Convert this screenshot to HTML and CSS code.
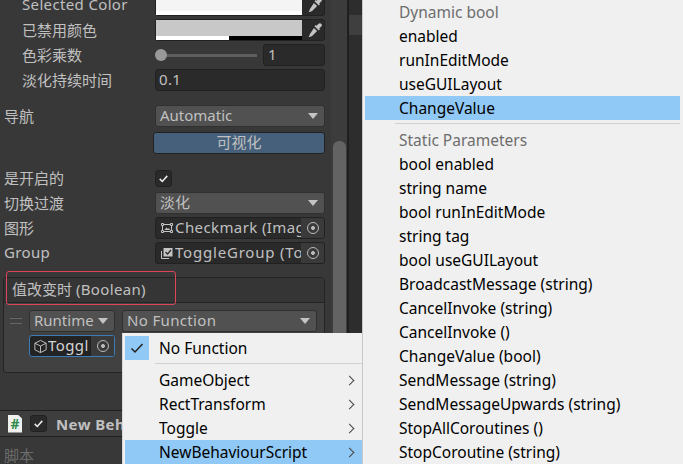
FILE: index.html
```html
<!DOCTYPE html>
<html lang="zh-CN">
<head>
   <meta charset="UTF-8">
   <title>Toggle Inspector</title>
   <link rel="stylesheet" href="styles.css">
</head>

<body>

<div class="editor">
   <div class="inspector">

      <div class="row row-sub cut-first">
         <span class="label lat">Selected Color</span>
         <div class="color-field">
            <div class="swatch swatch-white"><div class="alpha"></div></div>
            <svg class="dropper" viewBox="0 0 14 14"><path d="M10.500.8a1.900 1.900 0 0 1 2.700 2.700l-2 2 .8.8-1.200 1.200-4.300-4.300 1.200-1.200.8.8zM5.900 4.900l3.200 3.200-5 5c-.6.6-1.300.3-1.800.6l-.7.7-.9-.9.7-.7c.3-.5 0-1.200.6-1.800z"/></svg>
         </div>
      </div>

      <div class="row row-sub">
         <span class="label">已禁用颜色</span>
         <div class="color-field">
            <div class="swatch swatch-grey"><div class="alpha alpha-half"></div></div>
            <svg class="dropper" viewBox="0 0 14 14"><path d="M10.500.8a1.900 1.900 0 0 1 2.700 2.700l-2 2 .8.8-1.200 1.200-4.300-4.300 1.200-1.200.8.8zM5.900 4.900l3.200 3.200-5 5c-.6.6-1.300.3-1.800.6l-.7.7-.9-.9.7-.7c.3-.5 0-1.200.6-1.800z"/></svg>
         </div>
      </div>

      <div class="row row-sub">
         <span class="label">色彩乘数</span>
         <div class="slider-field">
            <div class="slider"><div class="slider-knob"></div></div>
            <div class="input input-num">1</div>
         </div>
      </div>

      <div class="row row-sub">
         <span class="label">淡化持续时间</span>
         <div class="input lat">0.1</div>
      </div>

      <div class="row row-nav">
         <span class="label">导航</span>
         <div class="dropdown">Automatic<span class="caret"></span></div>
      </div>

      <div class="row row-vis">
         <span class="label"></span>
         <div class="vis-button">可视化</div>
      </div>

      <div class="row row-on">
         <span class="label">是开启的</span>
         <div class="checkbox">
            <svg viewBox="0 0 16 16"><path d="M4 8.400l2.700 2.700L12 5.200"/></svg>
         </div>
      </div>

      <div class="row">
         <span class="label">切换过渡</span>
         <div class="dropdown">淡化<span class="caret"></span></div>
      </div>

      <div class="row">
         <span class="label">图形</span>
         <div class="object-field">
            <svg class="obj-icon" viewBox="0 0 14 14"><path d="M1.500 2.500h2v2h-2zM10.500 2.500h2v2h-2zM1.500 9.500h2v2h-2zM10.500 9.500h2v2h-2zM3.500 3.500h7M3.500 10.500h7M2.500 4.500v5M11.500 4.500v5"/><path class="fill" d="M4.500 9l2-2.500 1.500 1.500 1-1 1 2z"/></svg>
            <span class="obj-name">Checkmark (Imag</span>
            <span class="picker"><span class="picker-dot"></span></span>
         </div>
      </div>

      <div class="row">
         <span class="label lat">Group</span>
         <div class="object-field">
            <svg class="obj-icon" viewBox="0 0 14 14"><path d="M1.500 5v7.500H9"/><path class="fill" d="M3.500 2h9v8.500h-9z"/><path class="tick" d="M5.500 6l2 2 3.500-4"/></svg>
            <span class="obj-name obj-wide">ToggleGroup (To</span>
            <span class="picker"><span class="picker-dot"></span></span>
         </div>
      </div>

      <div class="event-box">
         <div class="event-head">值改变时 <span class="lat">(Boolean)</span></div>
         <div class="event-body">
            <div class="event-line">
               <span class="handle"></span>
               <div class="mini-drop mini-runtime">Runtime<span class="caret"></span></div>
               <div class="mini-drop mini-func">No Function<span class="caret"></span></div>
            </div>
            <div class="event-target">
               <div class="target-field">
                  <svg class="cube" viewBox="0 0 16 16"><path d="M8 1.500l6 3v7l-6 3-6-3v-7zM2 4.500l6 3 6-3M8 7.500v7"/></svg>
                  <span class="target-name">Toggl</span>
                  <span class="picker"><span class="picker-dot"></span></span>
               </div>
            </div>
         </div>
         <div class="annotation"></div>
      </div>

      <div class="comp-head">
         <div class="script-icon">#</div>
         <div class="checkbox comp-check">
            <svg viewBox="0 0 16 16"><path d="M4 8.400l2.700 2.700L12 5.200"/></svg>
         </div>
         <span class="comp-name">New Beh</span>
      </div>
      <div class="row script-row">
         <span class="label">脚本</span>
      </div>
   </div>

   <div class="scrollbar"><div class="thumb"></div></div>
   <div class="side"><div class="side-tab"></div></div>
</div>

<div class="menu menu-left">
   <div class="item item-checked">
      <span class="check-box"><svg viewBox="0 0 24 24"><path d="M6.500 12.500l3.500 3.500 7.500-8"/></svg></span>
      No Function
   </div>
   <div class="sep"></div>
   <div class="item">GameObject<span class="arrow"></span></div>
   <div class="item">RectTransform<span class="arrow"></span></div>
   <div class="item">Toggle<span class="arrow"></span></div>
   <div class="item item-on">NewBehaviourScript<span class="arrow"></span></div>
</div>

<div class="menu menu-right">
   <div class="item item-title">Dynamic bool</div>
   <div class="item">enabled</div>
   <div class="item">runInEditMode</div>
   <div class="item">useGUILayout</div>
   <div class="item item-on">ChangeValue</div>
   <div class="sep"></div>
   <div class="item item-title">Static Parameters</div>
   <div class="item">bool enabled</div>
   <div class="item">string name</div>
   <div class="item">bool runInEditMode</div>
   <div class="item">string tag</div>
   <div class="item">bool useGUILayout</div>
   <div class="item">BroadcastMessage (string)</div>
   <div class="item">CancelInvoke (string)</div>
   <div class="item">CancelInvoke ()</div>
   <div class="item">ChangeValue (bool)</div>
   <div class="item">SendMessage (string)</div>
   <div class="item">SendMessageUpwards (string)</div>
   <div class="item">StopAllCoroutines ()</div>
   <div class="item">StopCoroutine (string)</div>
</div>

</body>
</html>
```

FILE: styles.css
```css
html, body {
   height: 100%;
   overflow: hidden;
}

body {
   margin: 0;
   background: #383838;
   color: #c0c0c0;
   font-family: "Noto Sans", "Noto Sans CJK SC", sans-serif;
   font-size: 15px;
}

.lat {
   letter-spacing: .35px;
}

.editor {
   display: flex;
   height: 100%;
}

.inspector {
   width: 331px;
   flex: none;
   overflow: hidden;
   box-sizing: border-box;
   padding-right: 6px;
}

.row {
   display: flex;
   align-items: center;
   height: 22px;
   margin-bottom: 3px;
   white-space: nowrap;
}

.label {
   width: 155px;
   flex: none;
   padding-left: 4px;
   padding-bottom: 2px;
   box-sizing: border-box;
}

.row-sub .label {
   padding-left: 22px;
}

.cut-first {
   margin-top: -6px;
}

.row-nav {
   margin-top: 14px;
   margin-bottom: 5px;
}

.row-vis {
   margin-bottom: 13px;
}

.color-field {
   flex: 1;
   height: 100%;
   display: flex;
   box-sizing: border-box;
   background: #2a2a2a;
   border: 1px solid #212121;
   border-radius: 3px;
   align-items: stretch;
}

.swatch {
   width: 146px;
   height: 20px;
   display: flex;
   align-items: flex-end;
}

.swatch-white {
   background: #f4f4f4;
}

.swatch-grey {
   background: #c8c8c8;
}

.alpha {
   height: 4px;
   width: 100%;
   background: #fff;
}

.alpha-half {
   background: linear-gradient(90deg, #fff 50%, #000 50%);
}

.dropper {
   width: 14px;
   height: 14px;
   margin: 3px 0 0 6px;
   fill: #c4c4c4;
}

.slider-field {
   flex: 1;
   display: flex;
   align-items: center;
   height: 100%;
}

.slider {
   width: 102px;
   height: 3px;
   background: #5e5e5e;
   position: relative;
   margin-right: 6px;
}

.slider-knob {
   position: absolute;
   left: 0;
   top: -5px;
   width: 12px;
   height: 12px;
   border-radius: 50%;
   background: #999;
}

.input {
   flex: 1;
   height: 100%;
   box-sizing: border-box;
   background: #2a2a2a;
   border: 1px solid #212121;
   border-radius: 3px;
   padding-left: 3px;
   line-height: 19px;
}

.input-num {
   padding-left: 4px;
}

.dropdown {
   flex: 1;
   height: 100%;
   box-sizing: border-box;
   background: #515151;
   border: 1px solid #303030;
   border-radius: 3px;
   padding-left: 4px;
   padding-bottom: 1px;
   line-height: 19px;
   display: flex;
   justify-content: space-between;
   align-items: center;
}

.caret {
   width: 0;
   height: 0;
   border-left: 5px solid transparent;
   border-right: 5px solid transparent;
   border-top: 6px solid #c4c4c4;
   margin-right: 6px;
}

.vis-button {
   width: 172px;
   height: 100%;
   margin-left: -2px;
   box-sizing: border-box;
   background: #46607c;
   border: 1px solid #212121;
   border-radius: 3px;
   text-align: center;
   line-height: 19px;
}

.checkbox {
   width: 17px;
   height: 17px;
   background: #2a2a2a;
   border: 1px solid #212121;
   border-radius: 3px;
   box-sizing: border-box;
}

.checkbox svg {
   display: block;
   width: 15px;
   height: 15px;
   fill: none;
   stroke: #eee;
   stroke-width: 1.600;
}

.object-field {
   flex: 1;
   min-width: 0;
   height: 100%;
   box-sizing: border-box;
   background: #2a2a2a;
   border: 1px solid #212121;
   border-radius: 3px;
   display: flex;
   align-items: center;
   padding-left: 4px;
}

.obj-icon {
   width: 14px;
   height: 14px;
   flex: none;
   margin-right: 1px;
   fill: none;
   stroke: #c4c4c4;
}

.obj-icon .fill {
   fill: #c4c4c4;
   stroke: none;
}

.obj-icon .tick {
   stroke: #2a2a2a;
   stroke-width: 1.200;
}

.obj-name {
   flex: 1;
   min-width: 0;
   overflow: hidden;
   padding-bottom: 2px;
   letter-spacing: .4px;
}

.obj-wide {
   letter-spacing: .8px;
}

.picker {
   width: 23px;
   height: 100%;
   flex: none;
   background: #3a3a3a;
   border-radius: 0 2px 2px 0;
   display: flex;
   align-items: center;
   justify-content: center;
}

.picker-dot {
   width: 10px;
   height: 10px;
   border: 1px solid #b8b8b8;
   border-radius: 50%;
   background: radial-gradient(#b8b8b8 0 1.700px, transparent 2.200px);
}

.event-box {
   position: relative;
   margin: 13px 0 0 3px;
   width: 322px;
   height: 96px;
   box-sizing: border-box;
   border: 1px solid #242424;
   border-radius: 3px;
   background: #414141;
}

.event-head {
   height: 25px;
   box-sizing: border-box;
   line-height: 23px;
   padding-left: 8px;
   background: #353535;
   border-bottom: 1px solid #242424;
}

.event-body {
   padding-top: 7px;
}

.event-line {
   display: flex;
   align-items: center;
   height: 22px;
}

.handle {
   width: 12px;
   height: 4px;
   margin: 0 7px 0 6px;
   border-top: 1px solid #666;
   border-bottom: 1px solid #666;
}

.mini-drop {
   height: 22px;
   box-sizing: border-box;
   background: #515151;
   border: 1px solid #303030;
   border-radius: 3px;
   padding-left: 4px;
   padding-bottom: 1px;
   line-height: 19px;
   display: flex;
   justify-content: space-between;
   align-items: center;
}

.mini-runtime {
   width: 86px;
   margin-right: 7px;
}

.mini-func {
   width: 195px;
   letter-spacing: .35px;
}

.event-target {
   padding: 3px 0 0 25px;
}

.target-field {
   width: 86px;
   height: 22px;
   box-sizing: border-box;
   background: #232323;
   border: 1px solid #3c7ab8;
   border-radius: 3px;
   display: flex;
   align-items: center;
   padding-left: 3px;
}

.cube {
   width: 15px;
   height: 15px;
   flex: none;
   fill: none;
   stroke: #c4c4c4;
}

.target-name {
   flex: 1;
   min-width: 0;
   overflow: hidden;
   padding-bottom: 2px;
   color: #d4d4d4;
   letter-spacing: .4px;
}

.annotation {
   position: absolute;
   left: 2px;
   top: -7px;
   width: 170px;
   height: 34px;
   border: 1.500px solid #e0445a;
   border-radius: 3px;
   box-sizing: border-box;
}

.comp-head {
   margin-top: 37px;
   height: 27px;
   box-sizing: border-box;
   background: #3e3e3e;
   border-top: 1px solid #1f1f1f;
   border-bottom: 1px solid #1f1f1f;
   display: flex;
   align-items: center;
   padding-left: 8px;
   white-space: nowrap;
}

.script-icon {
   width: 14px;
   height: 18px;
   background: #f0f0f0;
   clip-path: polygon(0 0, 70% 0, 100% 22%, 100% 100%, 0 100%);
   color: #2c8a4a;
   font-weight: bold;
   font-size: 14px;
   line-height: 18px;
   text-align: center;
   margin-right: 8px;
}

.comp-check {
   margin-right: 9px;
}

.comp-name {
   overflow: hidden;
   font-weight: bold;
   letter-spacing: .4px;
}

.script-row {
   margin-top: 7px;
   color: #6c6c6c;
}

.scrollbar {
   width: 16px;
   flex: none;
   background: #3c3c3c;
   position: relative;
   border-right: 2px solid #1f1f1f;
}

.thumb {
   position: absolute;
   left: 2px;
   top: 141px;
   width: 13px;
   height: 220px;
   border-radius: 6px;
   background: #636363;
}

.side {
   flex: 1;
   background: #2d2d2d;
}

.side-tab {
   height: 20px;
   margin-top: 15px;
   background: #3f3f3f;
}

.menu {
   position: absolute;
   background: #f0f0f0;
   color: #000;
   box-sizing: border-box;
   font-family: "Noto Sans", sans-serif;
   font-size: 15.500px;
}

.menu-left {
   left: 122px;
   top: 333px;
   width: 240px;
   height: 131px;
   padding: 3px 0 0 2px;
   border-left: 1px solid #d8d8d8;
}

.menu-right {
   left: 362px;
   top: 0;
   width: 321px;
   height: 464px;
   padding: 0 3px 0 2px;
   border-left: 1px solid #c8c8c8;
}

.item {
   height: 24px;
   line-height: 24px;
   padding-left: 34px;
   position: relative;
   white-space: nowrap;
}

.item-title {
   color: #6d6d6d;
}

.item-on {
   background: #90c8f6;
}

.item-checked {
   display: flex;
   align-items: center;
}

.check-box {
   position: absolute;
   left: 0;
   top: 0;
   width: 24px;
   height: 24px;
   background: #90c8f6;
}

.check-box svg {
   display: block;
   fill: none;
   stroke: #222;
   stroke-width: 1.500;
}

.sep {
   height: 1px;
   margin: 3px 0 4px 30px;
   background: #d0d0d0;
}

.arrow {
   position: absolute;
   right: 9px;
   top: 9px;
   width: 6px;
   height: 6px;
   border-top: 1px solid #444;
   border-right: 1px solid #444;
   transform: rotate(45deg);
}
```
